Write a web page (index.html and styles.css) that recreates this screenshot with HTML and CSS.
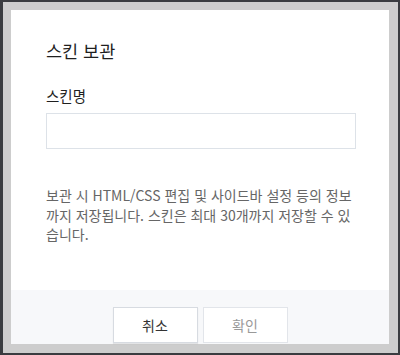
FILE: index.html
```html
<!DOCTYPE html>
<html lang="ko">
<head>
    <meta charset="UTF-8">
    <title>스킨 보관</title>
    <link rel="stylesheet" href="styles.css">
</head>
<body>
    <div class="frame">
        <div class="dialog">
            <div class="dialog-body">
                <h2 class="dialog-title">스킨 보관</h2>
                <label class="field-label" for="skin-name">스킨명</label>
                <input class="field-input" id="skin-name" type="text">
                <p class="notice">보관 시 HTML/CSS 편집 및 사이드바 설정 등의 정보까지 저장됩니다. 스킨은 최대 30개까지 저장할 수 있습니다.</p>
            </div>
            <div class="dialog-footer">
                <button class="btn btn-cancel" type="button">취소</button>
                <button class="btn btn-ok" type="button" disabled>확인</button>
            </div>
        </div>
    </div>
</body>
</html>
```

FILE: styles.css
```css
* {
    margin: 0;
    padding: 0;
    box-sizing: border-box;
}

html {
    background: #3a3c40;
}

body {
    height: 355px;
    padding: 2px 2px 2px 3px;
    font-family: "Noto Sans CJK KR", "Noto Sans", sans-serif;
    overflow: hidden;
}

/* Gray backdrop around the modal */
.frame {
    height: 100%;
    background: #cdcdcd;
    padding: 8px 9px 9px 8px;
}

.dialog {
    height: 100%;
    background: #fff;
    display: flex;
    flex-direction: column;
}

.dialog-body {
    flex: 1;
    padding: 28px 33px 0 35px;
}

.dialog-title {
    font-size: 17.5px;
    font-weight: 400;
    line-height: 26px;
    color: #1f1f1f;
    margin-bottom: 22px;
}

.field-label {
    display: block;
    font-size: 14.5px;
    font-weight: 400;
    line-height: 20px;
    color: #1f1f1f;
    margin-bottom: 7px;
}

.field-input {
    display: block;
    width: 100%;
    height: 36px;
    border: 1px solid #dde2e8;
    outline: none;
    background: #fff;
}

.notice {
    margin-top: 37px;
    font-size: 14px;
    line-height: 19.5px;
    color: #666;
    word-break: break-all;
}

/* Footer with buttons */
.dialog-footer {
    height: 54px;
    background: #f7f8fa;
    display: flex;
    justify-content: center;
    align-items: flex-end;
    gap: 5px;
    padding-bottom: 1px;
}

.btn {
    width: 85px;
    height: 36px;
    font-family: inherit;
    font-size: 14px;
    background: #fff;
    border: 1px solid #e2e5ea;
}

.btn-cancel {
    color: #333;
    border-color: #d7dbe1;
    box-shadow: 0 1px 1px rgba(0, 0, 0, 0.08);
}

.btn-ok {
    color: #999;
}
```
